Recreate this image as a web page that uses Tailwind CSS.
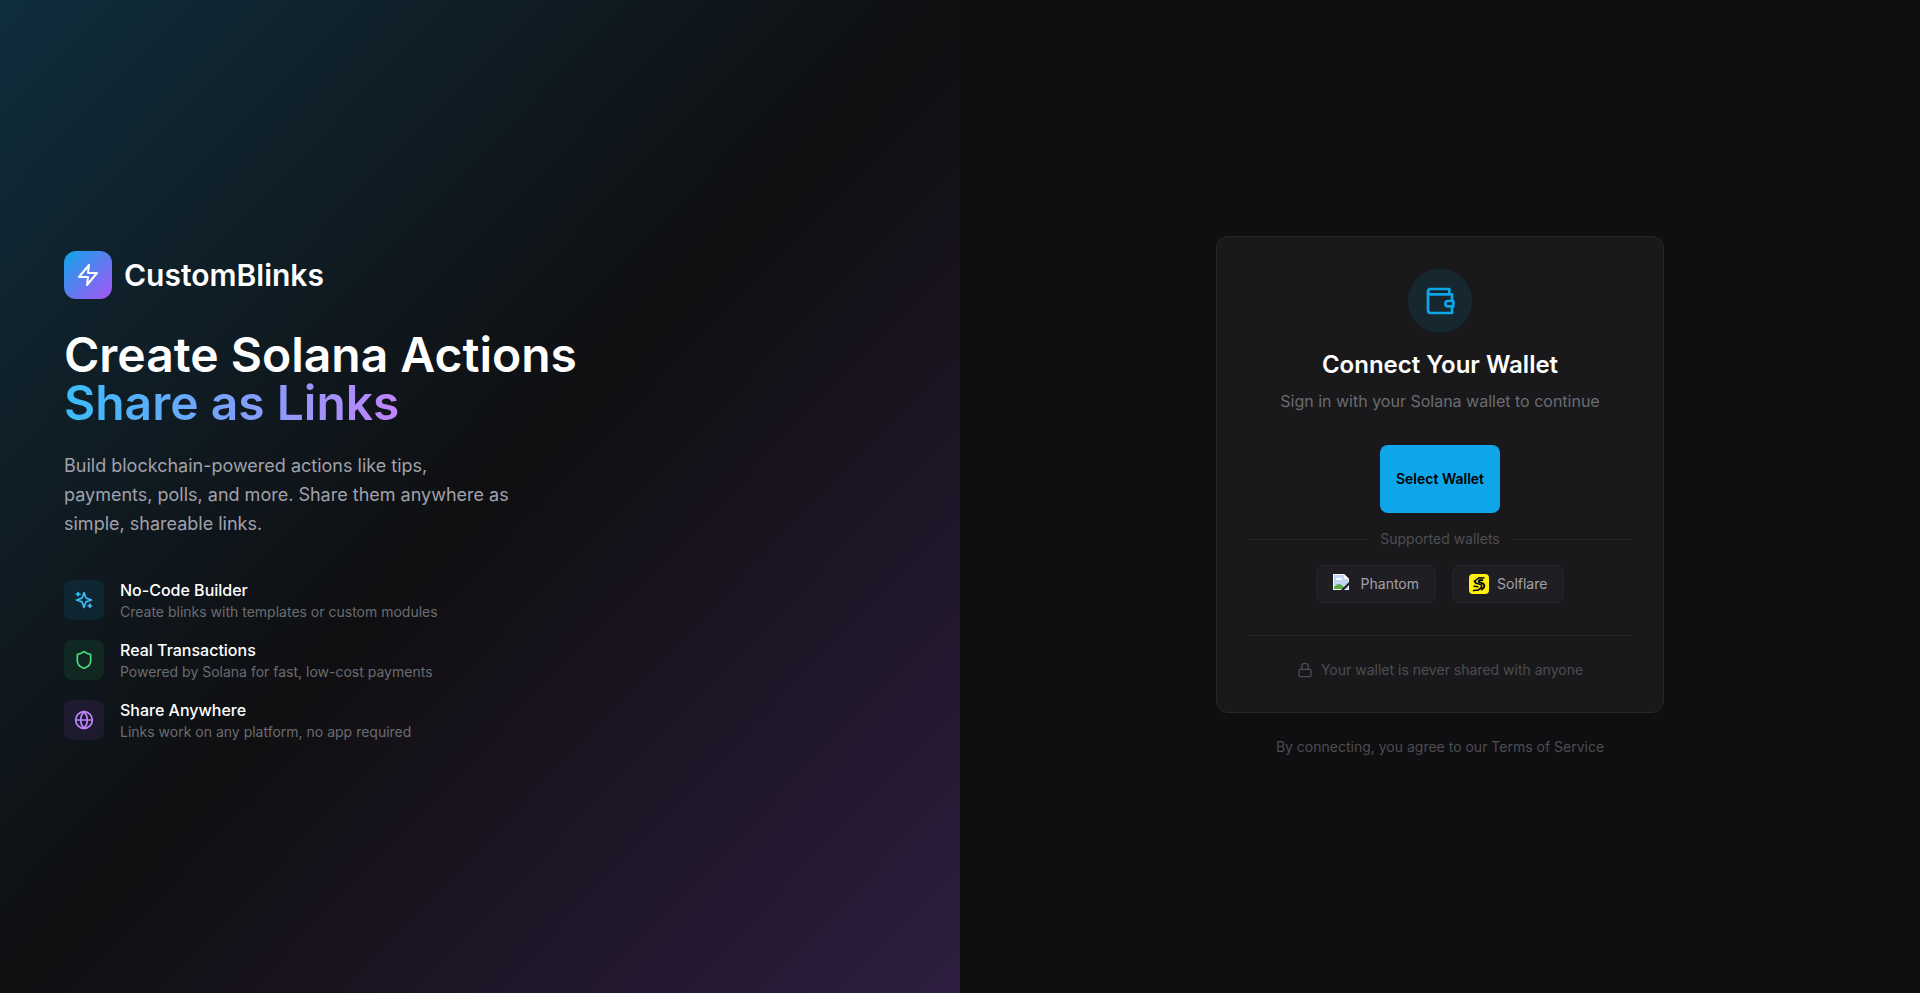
<!DOCTYPE html>
<html lang="en">
<head>
    <meta charset="UTF-8">
    <meta name="viewport" content="width=device-width, initial-scale=1.0">
    <title>CustomBlinks - Connect Your Wallet</title>
    <script src="https://cdn.jsdelivr.net/npm/@tailwindcss/browser@4"></script>
</head>
<body class="min-h-screen bg-[#0f0f11] text-white font-['Inter',sans-serif] flex">
    <!-- Intro panel -->
    <section class="w-1/2 px-16 flex flex-col justify-center bg-linear-to-br/srgb from-[#0f2d3c] via-[#0f0f11] to-[#2e1d3f]">
        <div class="flex items-center gap-3 mb-8">
            <div class="size-12 rounded-xl bg-linear-to-br/srgb from-[#0ea5e9] to-[#a855f7] flex items-center justify-center">
                <svg class="size-6" viewBox="0 0 24 24" fill="none" stroke="currentColor" stroke-width="2" stroke-linecap="round" stroke-linejoin="round"><polygon points="13 2 3 14 12 14 11 22 21 10 12 10 13 2"/></svg>
            </div>
            <span class="text-3xl font-semibold">CustomBlinks</span>
        </div>

        <h1 class="text-5xl leading-none font-semibold mb-6">
            <span class="block">Create Solana Actions</span>
            <span class="block w-fit bg-linear-to-r/srgb from-[#38bdf8] to-[#c084fc] bg-clip-text text-transparent">Share as Links</span>
        </h1>

        <p class="text-lg leading-[29px] text-[#a1a1aa] max-w-md mb-10">
            Build blockchain-powered actions like tips, payments, polls, and more. Share them anywhere as simple, shareable links.
        </p>

        <ul class="flex flex-col gap-4">
            <li class="flex items-center gap-4">
                <div class="size-10 rounded-lg bg-[#0ea5e9]/10 text-[#38bdf8] flex items-center justify-center">
                    <svg class="size-5" viewBox="0 0 24 24" fill="none" stroke="currentColor" stroke-width="2" stroke-linecap="round" stroke-linejoin="round"><path d="m12 3-1.912 5.813a2 2 0 0 1-1.275 1.275L3 12l5.813 1.912a2 2 0 0 1 1.275 1.275L12 21l1.912-5.813a2 2 0 0 1 1.275-1.275L21 12l-5.813-1.912a2 2 0 0 1-1.275-1.275L12 3Z"/><path d="M5 3v4"/><path d="M19 17v4"/><path d="M3 5h4"/><path d="M17 19h4"/></svg>
                </div>
                <div>
                    <h3 class="font-medium">No-Code Builder</h3>
                    <p class="text-sm text-[#6b6b70]">Create blinks with templates or custom modules</p>
                </div>
            </li>
            <li class="flex items-center gap-4">
                <div class="size-10 rounded-lg bg-[#22c55e]/10 text-[#4ade80] flex items-center justify-center">
                    <svg class="size-5" viewBox="0 0 24 24" fill="none" stroke="currentColor" stroke-width="2" stroke-linecap="round" stroke-linejoin="round"><path d="M20 13c0 5-3.5 7.5-7.66 8.95a1 1 0 0 1-.67-.01C7.5 20.5 4 18 4 13V6a1 1 0 0 1 1-1c2 0 4.5-1.2 6.24-2.72a1.17 1.17 0 0 1 1.52 0C14.51 3.81 17 5 19 5a1 1 0 0 1 1 1z"/></svg>
                </div>
                <div>
                    <h3 class="font-medium">Real Transactions</h3>
                    <p class="text-sm text-[#6b6b70]">Powered by Solana for fast, low-cost payments</p>
                </div>
            </li>
            <li class="flex items-center gap-4">
                <div class="size-10 rounded-lg bg-[#a855f7]/10 text-[#c084fc] flex items-center justify-center">
                    <svg class="size-5" viewBox="0 0 24 24" fill="none" stroke="currentColor" stroke-width="2" stroke-linecap="round" stroke-linejoin="round"><circle cx="12" cy="12" r="10"/><path d="M12 2a14.5 14.5 0 0 0 0 20 14.5 14.5 0 0 0 0-20"/><path d="M2 12h20"/></svg>
                </div>
                <div>
                    <h3 class="font-medium">Share Anywhere</h3>
                    <p class="text-sm text-[#6b6b70]">Links work on any platform, no app required</p>
                </div>
            </li>
        </ul>
    </section>

    <!-- Wallet sign-in -->
    <main class="w-1/2 flex flex-col items-center justify-center">
        <div class="w-full max-w-md rounded-xl border border-[#27272a] bg-[#19191b] p-8 flex flex-col items-center">
            <div class="size-16 rounded-full bg-[#0ea5e9]/10 text-[#0ea5e9] flex items-center justify-center mb-4">
                <svg class="size-8" viewBox="0 0 24 24" fill="none" stroke="currentColor" stroke-width="2" stroke-linecap="round" stroke-linejoin="round"><path d="M21 12V7H5a2 2 0 0 1 0-4h14v4"/><path d="M3 5v14a2 2 0 0 0 2 2h16v-5"/><path d="M18 12a2 2 0 0 0 0 4h4v-4Z"/></svg>
            </div>
            <h2 class="text-2xl font-semibold mb-2">Connect Your Wallet</h2>
            <p class="text-[#6b6b70] mb-8">Sign in with your Solana wallet to continue</p>

            <button type="button" class="h-17 px-4 rounded-lg bg-[#0ea5e9] text-black text-sm font-semibold mb-4">Select Wallet</button>

            <div class="w-full flex items-center gap-3 mb-4">
                <div class="flex-1 h-px bg-[#27272a]"></div>
                <span class="text-sm text-[#4d4d52]">Supported wallets</span>
                <div class="flex-1 h-px bg-[#27272a]"></div>
            </div>

            <div class="flex gap-4 mb-8">
                <div class="flex items-center gap-2 px-4 py-2 rounded-lg border border-[#27272a] bg-[#1f1f23]">
                    <svg class="size-5" viewBox="0 0 20 20"><path d="M0 0h11l5 5v11H0z" fill="#f4f6fa"/><path d="M1 1h10v4h4v10H1z" fill="#c3d5f5"/><path d="M11 0v5h5z" fill="#fff"/><path d="M3 6a2 2 0 0 1 3-2 2 2 0 0 1 3 2z" fill="#fff"/><path d="M1 15v-2q5-6 10 0v2z" fill="#5aa946"/><path d="M8 16l8-8v3l-5 5z" fill="#1f1f23"/></svg>
                    <span class="text-sm text-[#a1a1aa]">Phantom</span>
                </div>
                <div class="flex items-center gap-2 px-4 py-2 rounded-lg border border-[#27272a] bg-[#1f1f23]">
                    <!-- Blackletter-style Solflare mark -->
                    <svg class="size-5" viewBox="0 0 20 20"><rect width="20" height="20" rx="4" fill="#ffef0d"/><g fill="none" stroke="#02050a" stroke-linejoin="round"><path d="M15.500 3.500c-1.500 1.500-3-.500-6 .500L6.500 6.500c-1 1.500 0 2.500 2 3l3 1c1.500.600 1.500 2 .500 3L9.500 16c-2 .800-4-.500-5.500 1" stroke-width="1.500"/><path d="M14 6c-1.500.600-2.500-.600-4 .600-.800.900 0 1.500 1.500 2l2.500 1c2 1 1.500 3 .500 4.200L12 16" stroke-width="1.900"/><path d="M4.500 12.500c1.500-.800 3 .500 5 .500M5 6.500l2.500 3.500" stroke-width="1.500"/></g></svg>
                    <span class="text-sm text-[#a1a1aa]">Solflare</span>
                </div>
            </div>

            <div class="w-full border-t border-[#27272a] pt-6 flex items-center justify-center gap-2 text-sm text-[#4d4d52]">
                <svg class="size-4" viewBox="0 0 24 24" fill="none" stroke="currentColor" stroke-width="2" stroke-linecap="round" stroke-linejoin="round"><rect width="18" height="11" x="3" y="11" rx="2"/><path d="M7 11V7a5 5 0 0 1 10 0v4"/></svg>
                <span>Your wallet is never shared with anyone</span>
            </div>
        </div>
        <p class="mt-6 text-sm text-[#4d4d52]">By connecting, you agree to our Terms of Service</p>
    </main>
</body>
</html>
